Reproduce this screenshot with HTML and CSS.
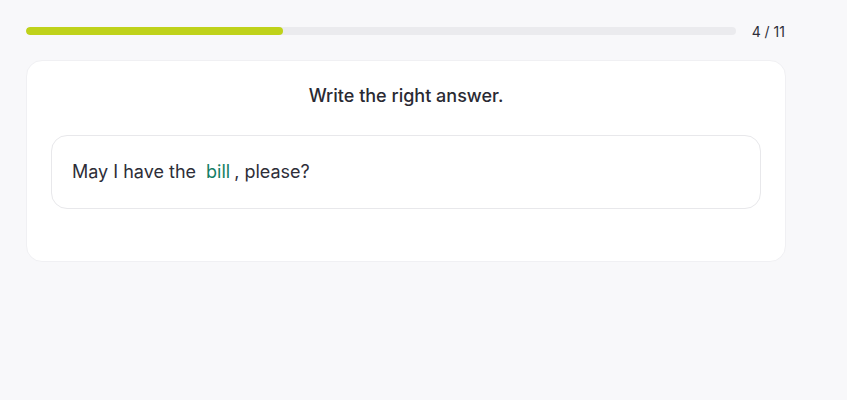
FILE: index.html
```html
<!DOCTYPE html>
<html lang="en">
<head>
<meta charset="utf-8">
<link rel="stylesheet" href="styles.css">
</head>
<body>
<div class="wrap">
  <div class="progress-row">
    <div class="track"><div class="fill" style="width:36.2%"></div></div>
    <div class="count">4 / 11</div>
  </div>
  <div class="card">
    <div class="title">Write the right answer.</div>
    <div class="sentence">May I have the <span class="answer">bill</span>, please?</div>
  </div>
</div>
</body>
</html>
```
FILE: styles.css
```css
html, body {
  margin: 0;
  padding: 0;
  background: #f8f8fa;
  font-family: Inter, "Noto Sans", sans-serif;
  color: #2a2a33;
}
.wrap {
  width: 760px;
  padding: 22px 0 0 26px;
}
.progress-row {
  display: flex;
  align-items: center;
  gap: 16px;
  height: 18px;
}
.track {
  flex: 1;
  height: 8px;
  border-radius: 4px;
  background: #ebebee;
  overflow: hidden;
}
.fill {
  height: 100%;
  background: #bfd21a;
  border-radius: 4px;
}
.count {
  font-size: 14px;
  color: #2e2e38;
  white-space: nowrap;
  padding-right: 1px;
}
.card {
  margin-top: 20px;
  background: #fff;
  border: 1px solid #f0f0f3;
  border-radius: 16px;
  padding: 24px 24px 52px;
}
.title {
  text-align: center;
  font-size: 18px;
  font-weight: 500;
  line-height: 22px;
  color: #2a2a33;
}
.sentence {
  margin-top: 28px;
  border: 1px solid #e8e8eb;
  border-radius: 16px;
  padding: 25px 20px;
  font-size: 18px;
  line-height: 22px;
  color: #2e2e38;
}
.answer {
  color: #157f66;
  margin: 0 4px 0 5px;
}
```
